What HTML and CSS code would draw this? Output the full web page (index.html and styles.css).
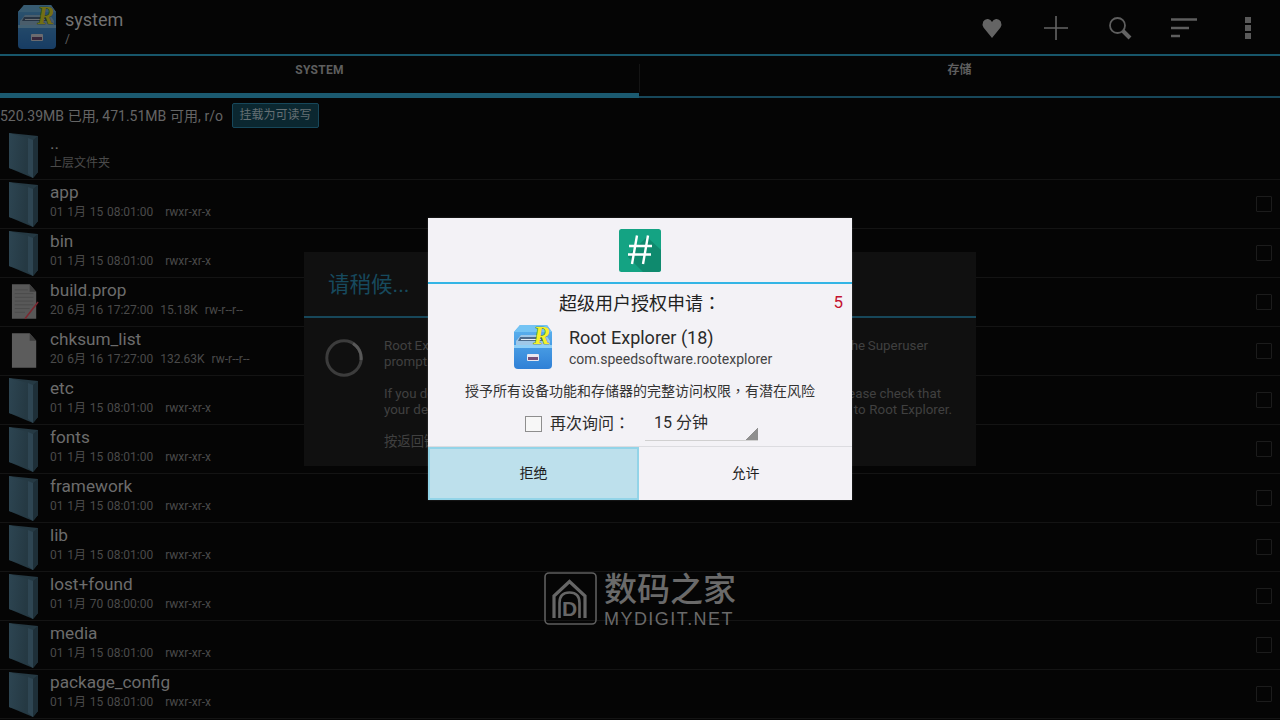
FILE: index.html
```html
<!DOCTYPE html>
<html lang="zh-CN">
<head>
<meta charset="utf-8">
<title>Root Explorer</title>
<link rel="stylesheet" href="styles.css">
</head>
<body>
<svg class="defs" width="0" height="0" aria-hidden="true">
  <defs>
    <linearGradient id="fold" x1="0" y1="0" x2="1" y2="0.2"><stop offset="0" stop-color="#2d4552"/><stop offset="1" stop-color="#253943"/></linearGradient>
    <linearGradient id="cab" x1="0" y1="0" x2="0" y2="1"><stop offset="0" stop-color="#5fb6f0"/><stop offset="1" stop-color="#2f80d6"/></linearGradient>
    <symbol id="folder" viewBox="0 0 30 46">
      <path d="M0 1 L29 4 V40 L24 46 L0 36 Z" fill="#253943"/>
      <path d="M0 1 L19 6 V42 L0 36 Z" fill="url(#fold)"/>
      <path d="M19 6 L24 8 V46 L19 42 Z" fill="#2e4552"/>
      <path d="M24 8 L29 4 V40 L24 46 Z" fill="#1e2f38"/>
    </symbol>
    <symbol id="doc" viewBox="0 0 30 38">
      <path d="M1 0 H20 L27 8 V37 H1 Z" fill="#5c5c5c"/>
      <path d="M20 0 L27 8 H20 Z" fill="#3e3e3e"/>
    </symbol>
    <symbol id="prop" viewBox="0 0 30 38">
      <path d="M1 0 H20 L27 8 V37 H1 Z" fill="#585858"/>
      <path d="M20 0 L27 8 H20 Z" fill="#3e3e3e"/>
      <path d="M4 6 H18 M4 10 H24 M4 14 H24 M4 18 H24 M4 22 H24 M4 26 H20 M4 30 H15" stroke="#4a4a4a" stroke-width="1"/>
      <path d="M15 37 L29 19" stroke="#7c2730" stroke-width="1.6"/>
    </symbol>
    <symbol id="cabinet" viewBox="0 0 40 46">
      <path d="M1 8 L7 1 H34 L39 8 V41 Q39 45 35 45 H5 Q1 45 1 41 Z" fill="url(#cab)"/>
      <path d="M7 1 H34 L39 8 H1 Z" fill="#74c4f4"/>
      <path d="M3 17 L8 11 H33 L37 17 V21 H3 Z" fill="#9fc8e8"/>
      <path d="M7 13 H31 L34 17 H5 Z" fill="#4e6c8c"/>
      <path d="M8 15 H28 V16 H8 Z" fill="#e6eef4"/>
      <path d="M1 21 H39 V24 H1 Z" fill="#8fd0f7"/>
      <rect x="14" y="30" width="12" height="7" rx="1" fill="#e8e8f0"/>
      <rect x="15" y="33" width="10" height="3" fill="#75507a"/>
    </symbol>
  </defs>
</svg>

<div class="screen">
  <header class="appbar">
    <svg class="app-logo" viewBox="0 0 40 46"><use href="#cabinet"/><text x="20.5" y="20" class="logo-r">R</text></svg>
    <div class="app-title">
      <div class="app-name">system</div>
      <div class="app-path">/</div>
    </div>
    <nav class="actions">
      <span class="action"><svg viewBox="0 0 24 24" width="24" height="24"><path d="M12 22 L3.5 11.5 Q1.8 8.5 3.2 5.5 Q5 2.6 8 3 Q10.8 3.4 12 6 Q13.2 3.4 16 3 Q19 2.6 20.8 5.5 Q22.2 8.5 20.5 11.5 Z" fill="#646464"/></svg></span>
      <span class="action"><svg viewBox="0 0 24 24" width="24" height="24"><path d="M12 0 V24 M0 12 H24" stroke="#646464" stroke-width="1.6"/></svg></span>
      <span class="action"><svg viewBox="0 0 24 24" width="24" height="24"><circle cx="9.5" cy="9.5" r="7.5" fill="none" stroke="#5e5e5e" stroke-width="1.8"/><path d="M15 15 L22 22" stroke="#646464" stroke-width="4"/></svg></span>
      <span class="action"><svg viewBox="0 0 26 24" width="26" height="24"><path d="M0 3.5 H26 M0 12 H18 M0 20 H9" stroke="#5e5e5e" stroke-width="2.6"/></svg></span>
      <span class="action"><svg viewBox="0 0 6 22" width="6" height="22"><path d="M0 0 H6 V6 H0 Z M0 8 H6 V14 H0 Z M0 16 H6 V22 H0 Z" fill="#5a5a5a"/></svg></span>
    </nav>
  </header>

  <div class="tabs">
    <div class="tab tab-active">SYSTEM</div>
    <div class="tab">存储</div>
  </div>

  <div class="info">
    <span class="info-text">520.39MB 已用, 471.51MB 可用, r/o</span>
    <span class="mount">挂载为可读写</span>
  </div>

  <ul class="files">
    <li class="row"><svg class="ficon"><use href="#folder"/></svg><div class="ftext"><div class="fname">..</div><div class="fmeta">上层文件夹</div></div></li>
    <li class="row"><svg class="ficon"><use href="#folder"/></svg><div class="ftext"><div class="fname">app</div><div class="fmeta"><span class="date">01 1月 15 08:01:00</span><span class="perm">rwxr-xr-x</span></div></div><i class="check"></i></li>
    <li class="row"><svg class="ficon"><use href="#folder"/></svg><div class="ftext"><div class="fname">bin</div><div class="fmeta"><span class="date">01 1月 15 08:01:00</span><span class="perm">rwxr-xr-x</span></div></div><i class="check"></i></li>
    <li class="row"><svg class="ficon doc"><use href="#prop"/></svg><div class="ftext"><div class="fname">build.prop</div><div class="fmeta"><span class="date">20 6月 16 17:27:00</span><span class="size">15.18K</span><span class="mode">rw-r--r--</span></div></div><i class="check"></i></li>
    <li class="row"><svg class="ficon doc"><use href="#doc"/></svg><div class="ftext"><div class="fname">chksum_list</div><div class="fmeta"><span class="date">20 6月 16 17:27:00</span><span class="size">132.63K</span><span class="mode">rw-r--r--</span></div></div><i class="check"></i></li>
    <li class="row"><svg class="ficon"><use href="#folder"/></svg><div class="ftext"><div class="fname">etc</div><div class="fmeta"><span class="date">01 1月 15 08:01:00</span><span class="perm">rwxr-xr-x</span></div></div><i class="check"></i></li>
    <li class="row"><svg class="ficon"><use href="#folder"/></svg><div class="ftext"><div class="fname">fonts</div><div class="fmeta"><span class="date">01 1月 15 08:01:00</span><span class="perm">rwxr-xr-x</span></div></div><i class="check"></i></li>
    <li class="row"><svg class="ficon"><use href="#folder"/></svg><div class="ftext"><div class="fname">framework</div><div class="fmeta"><span class="date">01 1月 15 08:01:00</span><span class="perm">rwxr-xr-x</span></div></div><i class="check"></i></li>
    <li class="row"><svg class="ficon"><use href="#folder"/></svg><div class="ftext"><div class="fname">lib</div><div class="fmeta"><span class="date">01 1月 15 08:01:00</span><span class="perm">rwxr-xr-x</span></div></div><i class="check"></i></li>
    <li class="row"><svg class="ficon"><use href="#folder"/></svg><div class="ftext"><div class="fname">lost+found</div><div class="fmeta"><span class="date">01 1月 70 08:00:00</span><span class="perm">rwxr-xr-x</span></div></div><i class="check"></i></li>
    <li class="row"><svg class="ficon"><use href="#folder"/></svg><div class="ftext"><div class="fname">media</div><div class="fmeta"><span class="date">01 1月 15 08:01:00</span><span class="perm">rwxr-xr-x</span></div></div><i class="check"></i></li>
    <li class="row"><svg class="ficon"><use href="#folder"/></svg><div class="ftext"><div class="fname">package_config</div><div class="fmeta"><span class="date">01 1月 15 08:01:00</span><span class="perm">rwxr-xr-x</span></div></div><i class="check"></i></li>
  </ul>
</div>

<div class="overlay">
  <section class="wait">
    <h2 class="wait-title">请稍候...</h2>
    <div class="wait-body">
      <svg class="spinner" viewBox="0 0 38 38" width="38" height="38"><circle cx="19" cy="19" r="17.2" fill="none" stroke="#3c3c3c" stroke-width="3"/><path d="M28 4.5 A17.2 17.2 0 0 1 36 21" fill="none" stroke="#585858" stroke-width="3"/></svg>
      <div class="wait-text">
        <p><span class="line-a">Root Explorer is waiting for superuser access on this device. Please respond to the Superuser</span><br>prompt.</p>
        <p><span class="line-b">If you do not see the Superuser prompt after waiting for a few more seconds, please check that</span><br><span class="line-c">your device is properly rooted and that your superuser app has granted access to Root Explorer.</span></p>
        <p>按返回键取消。</p>
      </div>
    </div>
  </section>

  <section class="su">
    <div class="su-head">
      <svg viewBox="0 0 42 43" width="42" height="43">
        <rect width="42" height="43" rx="2.5" fill="#14a383"/>
        <path d="M28 8 L42 21 V40 Q42 43 39 43 H24 L9 28 L11 24 Z" fill="#0f8a6e"/>
        <path d="M18 6.5 L13 35 M29 6.5 L24 35 M10 17 H33 M9 25.5 H32" stroke="#fff" stroke-width="2.4" fill="none"/>
      </svg>
    </div>
    <div class="su-title-row">
      <span class="su-title">超级用户授权申请<span class="punct" lang="zh-TW">：</span></span>
      <span class="su-count">5</span>
    </div>
    <div class="su-app">
      <svg class="su-icon" viewBox="0 0 40 46"><use href="#cabinet"/><text x="20.5" y="20" class="logo-r">R</text></svg>
      <div>
        <div class="su-app-name">Root Explorer (18)</div>
        <div class="su-app-pkg">com.speedsoftware.rootexplorer</div>
      </div>
    </div>
    <p class="su-desc">授予所有设备功能和存储器的完整访问权限<span class="punct" lang="zh-TW">，</span>有潜在风险</p>
    <div class="su-ask">
      <i class="su-check"></i>
      <span class="su-ask-label">再次询问<span class="punct" lang="zh-TW">：</span></span>
      <span class="su-select">15 分钟</span>
    </div>
    <div class="su-buttons">
      <div class="su-btn su-deny">拒绝</div>
      <div class="su-btn">允许</div>
    </div>
  </section>
</div>

<aside class="mark">
  <svg class="mark-logo" viewBox="0 0 53 53" width="53" height="53">
    <rect x="1" y="1" width="51" height="51" rx="4" fill="none" stroke="#5e5e5e" stroke-width="1.6"/>
    <path d="M10 46 V24 L25.5 9.5 L41 24 V46" fill="none" stroke="#666" stroke-width="3.2"/>
    <path d="M15.5 46 V31 Q15.5 20.5 25.5 20.5 Q35.5 20.5 35.5 31 V46" fill="none" stroke="#666" stroke-width="2.6"/>
    <text x="25.5" y="43.5" class="mark-d">D</text>
  </svg>
  <div class="mark-text">
    <div class="mark-cn">数码之家</div>
    <div class="mark-en">MYDIGIT.NET</div>
  </div>
</aside>
</body>
</html>
```
FILE: styles.css
```css
* { box-sizing: border-box; }
html, body { margin: 0; height: 720px; overflow: hidden; background: #050505; }
body { position: relative; font-family: Roboto, "Noto Sans CJK SC", sans-serif; color: #6c6c6c; }
.defs { position: absolute; }
.screen { display: flex; flex-direction: column; height: 720px; }

.appbar { display: flex; align-items: center; height: 56px; border-bottom: 2px solid #17566a; padding-left: 17px; }
.app-logo { width: 40px; height: 46px; opacity: .45; overflow: visible; }
.logo-r { font: italic 700 25px "Liberation Serif", serif; fill: #f6f02a; stroke: #1c5a20; stroke-width: .6; paint-order: stroke; }
.app-title { margin-left: 8px; }
.app-name { font-size: 18px; line-height: 21px; color: #727272; margin-top: 1px; }
.app-path { font-size: 12px; line-height: 15px; margin-top: 2px; color: #606060; }
.actions { display: flex; margin-left: auto; }
.action { display: flex; align-items: center; justify-content: center; width: 64px; height: 54px; padding-top: 1px; }

.tabs { display: flex; height: 42px; }
.tab { flex: 1; text-align: center; font-size: 12px; font-weight: 700; line-height: 28px; color: #5e5e5e; border-bottom: 2px solid #17475a; }
.tab-active { position: relative; flex: none; width: 639px; letter-spacing: .3px; border-bottom: 5px solid #1b5a70; }
.tab-active::after { content: ""; position: absolute; right: -1px; top: 8px; width: 1px; height: 28px; background: #141414; }

.info { display: flex; align-items: center; height: 33px; font-size: 14px; color: #656565; padding-top: 1px; }
.info-text { word-spacing: .3px; }
.mount { margin-left: 9px; width: 87px; height: 25px; line-height: 23px; text-align: center; font-size: 12px; color: #667074; background: #0b2730; border: 1px solid #17475a; border-radius: 2px; }

.files { list-style: none; margin: 0; padding: 0; }
.row { display: flex; align-items: center; height: 49px; border-bottom: 1px solid #141414; padding-left: 9px; }
.ficon { width: 30px; height: 46px; flex: none; }
.ficon.doc { height: 38px; margin-left: 2px; width: 28px; }
.ftext { margin-left: 11px; flex: 1; padding-bottom: 6px; }
.fname { font-size: 17.2px; line-height: 20px; margin-bottom: 1px; color: #6c6c6c; }
.fmeta { display: flex; font-size: 12px; line-height: 18px; color: #4a4a4a; }
.date { word-spacing: .75px; }
.perm { margin-left: 12px; }
.size { margin-left: 7px; }
.mode { margin-left: 7px; }
.check { width: 16px; height: 16px; border: 1px solid #1c1c1c; border-radius: 1px; margin-right: 8px; }

.overlay { position: absolute; left: 0; top: 0; width: 1280px; height: 718px; display: grid; place-items: center; }
.overlay > section { grid-area: 1 / 1; }

.wait { width: 672px; height: 214px; background: #101010; color: #404040; font-size: 13.33px; line-height: 16px; }
.wait-title { margin: 0; height: 66px; padding: 18px 0 0 24px; font-size: 21.5px; line-height: 30px; font-weight: 400; color: #174a5e; border-bottom: 2px solid #17475a; }
.wait-body { display: flex; padding: 21px 0 0 21px; }
.spinner { flex: none; margin-right: 21px; }
.wait-text { margin-top: -1px; white-space: nowrap; }
.wait-text p { margin: 0 0 16px; }
.line-a { word-spacing: -.5px; }
.line-b { word-spacing: -.2px; }
.line-c { word-spacing: .38px; }

.su { position: relative; width: 424px; height: 282px; background: #f3f2f6; color: #1e1e1e; box-shadow: 0 0 2px rgba(255,255,255,.2); }
.su-head { display: flex; justify-content: center; align-items: center; height: 66px; border-bottom: 2px solid #33b5e5; }
.su-title-row { position: relative; height: 39px; text-align: center; font-size: 18px; line-height: 36px; color: #222; }
.punct { font-family: "Noto Sans CJK TC", sans-serif; }
.su-count { position: absolute; right: 9px; top: 0; font-size: 17px; color: #c4122f; font-family: Roboto, sans-serif; }
.su-app { display: flex; align-items: center; padding-left: 85px; height: 48px; }
.su-icon { width: 40px; height: 46px; flex: none; margin-right: 16px; overflow: visible; }
.su-app-name { font-size: 18px; line-height: 21px; color: #2a2a2a; }
.su-app-pkg { font-size: 14px; line-height: 16px; color: #444; margin-top: 3px; }
.su-desc { margin: 9px 0 0; text-align: center; font-size: 14px; line-height: 20px; color: #333; }
.su-ask { display: flex; align-items: center; height: 32px; margin-top: 7px; padding-left: 97px; font-size: 16px; color: #2c2c2c; }
.su-check { width: 17px; height: 16px; background: #f7f7f7; border: 1px solid #8e8e8e; }
.su-ask-label { margin-left: 8px; width: 95px; white-space: nowrap; line-height: 22px; margin-bottom: 2px; }
.su-select { position: relative; width: 113px; padding-left: 9px; height: 31px; line-height: 26px; border-bottom: 1px solid #d0d0d0; margin-top: 2px; }
.su-select::after { content: ""; position: absolute; right: 0; bottom: 0; width: 12px; height: 12px; background: linear-gradient(135deg, transparent 50%, #8f8f8f 50%); }
.su-buttons { position: absolute; left: 0; right: 0; bottom: 0; display: flex; height: 54px; border-top: 1px solid #dcdce0; }
.su-btn { flex: 1; display: flex; align-items: center; justify-content: center; font-size: 14px; color: #1e1e1e; padding-bottom: 4px; }
.su-deny { flex: none; width: 211px; background: #bde0ec; border: 2px solid #93d4e8; }

.mark { position: absolute; left: 544px; top: 572px; display: flex; gap: 7px; color: #6a6a6a; }
.mark-logo { flex: none; }
.mark-d { font: 700 21px "Liberation Sans", sans-serif; fill: #666; text-anchor: middle; }
.mark-cn { font-size: 33px; line-height: 36px; white-space: nowrap; font-weight: 500; }
.mark-en { font: 18px/18px "Liberation Sans", sans-serif; letter-spacing: 1.45px; margin-top: 2px; white-space: nowrap; }
```
